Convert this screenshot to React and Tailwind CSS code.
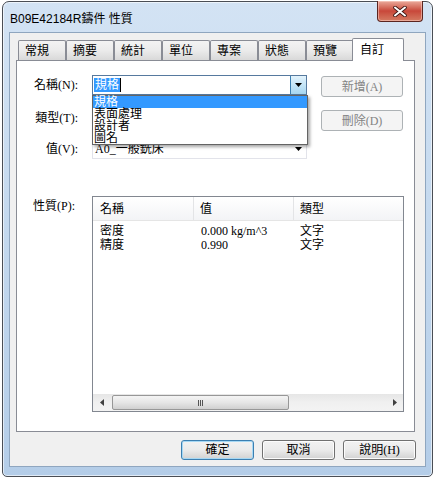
import React from 'react';

const ui = "font-['Liberation_Serif','Noto_Sans_CJK_TC',serif] text-[12px] leading-[12px] text-black";

const tabs = ['常規', '摘要', '統計', '單位', '專案', '狀態', '預覽'];

function Arrow({ className = '' }) {
  return (
    <svg width="7" height="4" viewBox="0 0 7 4" className={className}>
      <path d="M0 0h7L3.5 4z" fill="#000" />
    </svg>
  );
}

function Button({ children, disabled, primary }) {
  const base = 'flex items-center justify-center rounded-[3px] border';
  if (disabled) {
    return (
      <div className={`${base} w-[82px] h-[21px] border-[#adb2b5] bg-[#f4f4f4] text-[#838383]`}>
        {children}
      </div>
    );
  }
  return (
    <div
      className={`${base} w-[73px] h-[20px] bg-gradient-to-b from-[#f2f2f2] via-[#ebebeb] to-[#d2d2d2] ${
        primary ? 'border-[#3c7fb1] shadow-[inset_0_0_0_1px_#a6d8f4]' : 'border-[#707070] shadow-[inset_0_0_0_1px_#fcfcfc]'
      }`}
    >
      {children}
    </div>
  );
}

function Combo({ children, focused, faint }) {
  return (
    <div
      className={`relative flex h-[20px] w-[215px] items-center border bg-white ${
        focused ? 'border-[#56799e]' : faint ? 'border-[#e2e3ea]' : 'border-[#abadb3]'
      }`}
    >
      <div className="flex-1 pl-[1px]">{children}</div>
      {focused ? (
        <div className="flex h-full w-[16px] items-center justify-center border-l border-[#3c7fb1] bg-gradient-to-b from-[#e3f3fc] to-[#a5d6f1]">
          <Arrow />
        </div>
      ) : (
        <div className="flex h-full w-[16px] items-center justify-center">
          <Arrow />
        </div>
      )}
    </div>
  );
}

function CloseButton() {
  return (
    <div className="-mt-[1px] mr-[9px] flex h-[21px] w-[46px] items-center justify-center rounded-b-[4px] border border-t-0 border-[#5b2520] bg-gradient-to-b from-[#e9a99b] via-[#c8473a] to-[#d47a62] shadow-[inset_0_0_0_1px_rgba(255,220,210,0.5)]">
      <svg width="14" height="11" viewBox="0 0 14 11">
        <path d="M2 1.5l10 8M12 1.5l-10 8" stroke="#3a1512" strokeWidth="3.6" strokeLinecap="round" />
        <path d="M2 1.5l10 8M12 1.5l-10 8" stroke="#fff" strokeWidth="2" strokeLinecap="round" />
      </svg>
    </div>
  );
}

export default function App() {
  const rows = [
    { name: '密度', value: '0.000 kg/m^3', type: '文字' },
    { name: '精度', value: '0.990', type: '文字' },
  ];

  return (
    <div className="h-[478px] w-[434px] bg-white pl-[2px] pt-[1px]">
      <div className="flex h-[476px] w-[431px] flex-col rounded-t-[7px] rounded-b-[5px] border border-[#4a4e55] bg-gradient-to-b from-[#d3e3f4] via-[#c3d8ee] to-[#b4cde8] shadow-[inset_0_0_0_1px_rgba(255,255,255,0.6)]">
        {/* title bar */}
        <div className="flex h-[30px] items-start justify-between">
          <div className="mt-[10px] pl-[7px] font-['Liberation_Sans','Noto_Sans_CJK_TC',sans-serif] text-[12px] leading-[14px] text-black">
            B09E42184R鑄件 性質
          </div>
          <CloseButton />
        </div>

        {/* client */}
        <div className={`mx-[6px] flex h-[435px] flex-col border border-[#8fa6bf] bg-[#f0f0f0] ${ui}`}>
          {/* tabs */}
          <div className="relative z-10 mt-[7px] flex h-[20px] items-start pl-[8px]">
            {tabs.map((t) => (
              <div
                key={t}
                className="flex h-[20px] w-[48px] items-center rounded-t-[2px] border border-b-0 border-[#898c95] bg-gradient-to-b from-[#f3f3f3] via-[#ebebeb] to-[#d9d9d9] pl-[6px] pt-[1px]"
              >
                {t}
              </div>
            ))}
            <div className="-ml-[2px] -mt-[2px] flex h-[23px] w-[52px] items-start rounded-t-[2px] border border-b-0 border-[#898c95] bg-white pl-[7px] pt-[5px]">
              自訂
            </div>
          </div>

          {/* panel */}
          <div className="ml-[6px] flex h-[372px] w-[399px] flex-col border border-[#898c95] bg-white pt-[14px]">
            {/* 名稱 */}
            <div className="flex items-start">
              <div className="w-[61px] text-right leading-[20px]">名稱(N):</div>
              <div className="relative z-20 ml-[14px]">
                <Combo focused>
                  <div className="flex items-center">
                    <span className="bg-[#3399ff] px-[1px] py-[1px] text-white">規格</span>
                    <span className="h-[14px] w-px bg-black" />
                  </div>
                </Combo>
                <div className="absolute left-0 top-full w-[216px] border border-[#646464] bg-white shadow-[2px_2px_3px_rgba(0,0,0,0.35)]">
                  {['規格', '表面處理', '設計者', '圖名'].map((it, i) => (
                    <div
                      key={it}
                      className={`h-[12px] pl-[1px] ${i === 0 ? 'bg-[#3399ff] text-white' : ''}`}
                    >
                      {it}
                    </div>
                  ))}
                </div>
              </div>
              <div className="ml-[14px] mt-[1px]">
                <Button disabled>新增(A)</Button>
              </div>
            </div>

            {/* 類型 */}
            <div className="mt-[10px] flex items-start">
              <div className="w-[61px] pt-[1px] text-right leading-[20px]">類型(T):</div>
              <div className="ml-[14px]">
                <Combo />
              </div>
              <div className="ml-[14px] mt-[3px]">
                <Button disabled>刪除(D)</Button>
              </div>
            </div>

            {/* 值 */}
            <div className="mt-[8px] flex items-start">
              <div className="w-[61px] text-right leading-[20px]">值(V):</div>
              <div className="ml-[14px]">
                <Combo faint>
                  <span className="pl-[1px]">A0_一般銑床</span>
                </Combo>
              </div>
            </div>

            {/* 性質 */}
            <div className="mt-[37px] flex items-start">
              <div className="w-[75px] pl-[16px] pt-[4px]">性質(P):</div>
              <div className="flex h-[216px] w-[312px] flex-col border border-[#828790] bg-white">
                <div className="flex h-[24px] border-b border-[#e5e5e5] bg-gradient-to-b from-white to-[#f3f4f6]">
                  <div className="flex w-[101px] items-center border-r border-[#e3e4e6] pl-[7px]">名稱</div>
                  <div className="flex w-[100px] items-center border-r border-[#e3e4e6] pl-[6px]">值</div>
                  <div className="flex flex-1 items-center pl-[6px]">類型</div>
                </div>
                <div className="flex-1 pt-[3px]">
                  {rows.map((r) => (
                    <div key={r.name} className="flex h-[14px] items-center">
                      <div className="w-[101px] pl-[7px]">{r.name}</div>
                      <div className="w-[100px] pl-[7px]">{r.value}</div>
                      <div className="flex-1 pl-[6px]">{r.type}</div>
                    </div>
                  ))}
                </div>
                {/* horizontal scrollbar */}
                <div className="flex h-[17px] items-center bg-gradient-to-b from-[#e6e6e6] via-[#f0f0f0] to-[#f3f3f3]">
                  <div className="flex h-full w-[17px] items-center justify-center">
                    <svg width="4" height="7" viewBox="0 0 4 7">
                      <path d="M4 0v7L0 3.5z" fill="#404040" />
                    </svg>
                  </div>
                  <div className="ml-[2px] flex h-[15px] w-[177px] items-center justify-center rounded-[2px] border border-[#979797] bg-gradient-to-b from-[#f4f4f4] via-[#e6e6e6] to-[#d0d0d0]">
                    <div className="flex gap-[1px]">
                      <span className="h-[6px] w-[1px] bg-[#555]" />
                      <span className="h-[6px] w-[1px] bg-[#555]" />
                      <span className="h-[6px] w-[1px] bg-[#555]" />
                    </div>
                  </div>
                  <div className="flex-1" />
                  <div className="flex h-full w-[17px] items-center justify-center">
                    <svg width="4" height="7" viewBox="0 0 4 7">
                      <path d="M0 0v7L4 3.5z" fill="#404040" />
                    </svg>
                  </div>
                </div>
              </div>
            </div>
          </div>

          {/* bottom buttons */}
          <div className="mt-[8px] flex justify-end gap-[8px] pr-[9px]">
            <Button primary>確定</Button>
            <Button>取消</Button>
            <Button>說明(H)</Button>
          </div>
        </div>
      </div>
    </div>
  );
}
